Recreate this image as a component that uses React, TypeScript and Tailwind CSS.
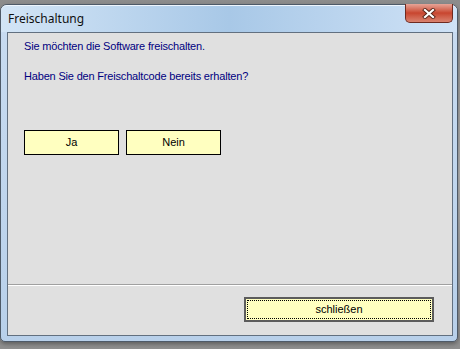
import React from "react";

function CloseGlyph() {
  return (
    <svg width="14" height="11" viewBox="0 0 14 11">
      <path d="M3 2 L11 9 M11 2 L3 9" stroke="#5a2418" strokeWidth="4" strokeLinecap="square" />
      <path d="M3 2 L11 9 M11 2 L3 9" stroke="#ffffff" strokeWidth="2.2" strokeLinecap="square" />
    </svg>
  );
}

export default function App() {
  const body = { fontFamily: '"Liberation Sans", Arial, sans-serif' } as React.CSSProperties;
  return (
    <div className="w-[460px] h-[349px] overflow-hidden bg-gradient-to-b from-[#8c8c8c] via-[#b4b4b4] to-[#8e8e8e]">
      <div className="pt-[4px]">
        <div className="w-[458px] h-[338px] flex flex-col border border-[#4e5a68] rounded-t-[7px] rounded-b-[5px] bg-gradient-to-b from-[#c9dcf1] to-[#b8d0ea] shadow-[0_2px_4px_rgba(0,0,0,0.35)]">
          <div className="h-[27px] flex justify-between pl-[7px] pr-[4px] rounded-t-[6px] bg-gradient-to-r from-[#d3e5f6] via-[#a8c8e7] to-[#cfe2f6] border-t border-[#eef5fc]">
            <div className="pt-[4px] text-[12px] text-[#101010]" style={{ fontFamily: '"Noto Sans", "Open Sans", sans-serif' }}>
              Freischaltung
            </div>
            <div className="-mt-[2px] w-[48px] h-[19px] flex items-center justify-center rounded-b-[5px] border border-[#6e2a20] border-t-0 bg-gradient-to-b from-[#e6a497] via-[#c8452f] to-[#d9826f]">
              <CloseGlyph />
            </div>
          </div>
          <div className="flex-1 flex flex-col pl-[6px] pr-[4px] pb-[5px]">
            <div className="flex-1 flex flex-col border border-[#627080] bg-[#e0e0e0]" style={body}>
              <div className="flex-1 flex flex-col pl-[16px] pt-[7px]">
                <div className="text-[11px] leading-[13px] tracking-[-0.18px] text-[#000080]">Sie möchten die Software freischalten.</div>
                <div className="mt-[17px] text-[11px] leading-[13px] tracking-[-0.18px] text-[#000080]">Haben Sie den Freischaltcode bereits erhalten?</div>
                <div className="mt-[47px] flex gap-[7px]">
                  <div className="w-[95px] h-[25px] flex items-center justify-center border border-black bg-[#ffffc0] text-[11px] text-black">Ja</div>
                  <div className="w-[95px] h-[25px] flex items-center justify-center border border-black bg-[#ffffc0] text-[11px] text-black">Nein</div>
                </div>
              </div>
              <div className="border-t border-[#a0a0a0] border-b border-b-white" />
              <div className="h-[49px] flex justify-end items-start pt-[11px] pr-[18px]">
                <div className="w-[190px] h-[25px] border-2 border-[#5c5c5c] bg-[#ffffc0] p-[1px]">
                  <div className="w-full h-full border border-dotted border-black flex items-center justify-center text-[11px] text-black">
                    schließen
                  </div>
                </div>
              </div>
            </div>
          </div>
        </div>
      </div>
    </div>
  );
}
